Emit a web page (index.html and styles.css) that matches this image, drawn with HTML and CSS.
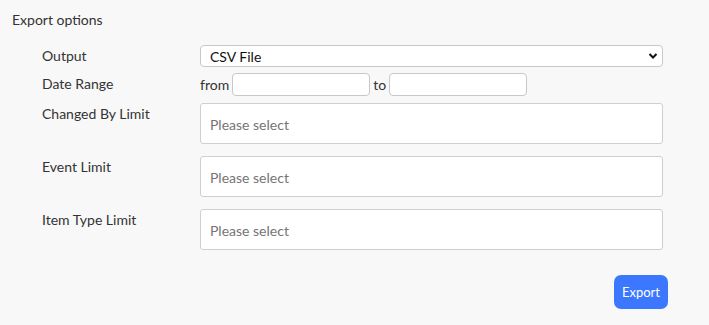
FILE: index.html
```html
<!DOCTYPE html>
<html>
<head>
<meta charset="utf-8">
<link rel="stylesheet" href="styles.css">
</head>
<body>
<div class="panel">
  <div class="title">Export options</div>
  <div class="form">
    <div class="row row-output">
      <div class="label">Output</div>
      <div class="control">
        <div class="select">
          <span>CSV File</span>
          <svg class="chev" width="10" height="8" viewBox="0 0 10 8"><path d="M1.5 2 L5 5.5 L8.5 2" fill="none" stroke="#111" stroke-width="2"/></svg>
        </div>
      </div>
    </div>
    <div class="row row-date">
      <div class="label">Date Range</div>
      <div class="control date">
        <span class="word">from</span><div class="input"></div><span class="word">to</span><div class="input"></div>
      </div>
    </div>
    <div class="row row-multi">
      <div class="label">Changed By Limit</div>
      <div class="control"><div class="multi">Please select</div></div>
    </div>
    <div class="row row-multi">
      <div class="label">Event Limit</div>
      <div class="control"><div class="multi">Please select</div></div>
    </div>
    <div class="row row-multi">
      <div class="label">Item Type Limit</div>
      <div class="control"><div class="multi">Please select</div></div>
    </div>
  </div>
  <div class="actions"><button class="btn">Export</button></div>
</div>
</body>
</html>
```
FILE: styles.css
```css
html, body {
  margin: 0;
  padding: 0;
  background: #f8f8f8;
}
body {
  font-family: Lato, "Open Sans", sans-serif;
  color: #333;
  font-size: 14px;
}
.panel {
  padding: 12px 0 0 12px;
  width: 656px;
}
.title {
  font-size: 14px;
  line-height: 16px;
  height: 16px;
}
.form {
  margin-top: 17px;
  padding-left: 30px;
}
.row {
  display: flex;
}
.label {
  width: 158px;
  flex: none;
}
.control {
  width: 463px;
}
.row-output {
  height: 22px;
  margin-bottom: 6px;
}
.row-output .label {
  line-height: 22px;
}
.select {
  box-sizing: border-box;
  height: 22px;
  border: 1px solid #c8c8c8;
  border-radius: 4px;
  background: #fff;
  display: flex;
  align-items: center;
  justify-content: space-between;
  padding: 0 4px 0 9px;
  color: #111;
  font-size: 14px;
}
.chev { display: block; }
.row-date {
  height: 23px;
  margin-bottom: 7px;
}
.row-date .label {
  line-height: 22px;
}
.date {
  display: flex;
  align-items: center;
}
.word {
  color: #333;
}
.input {
  box-sizing: border-box;
  width: 138px;
  height: 23px;
  border: 1px solid #c8c8c8;
  border-radius: 4px;
  background: #fff;
  margin: 0 3px 0 3px;
}
.row-multi {
  height: 41px;
  margin-bottom: 12px;
}
.row-multi .label {
  padding-top: 2px;
}
.multi {
  box-sizing: border-box;
  height: 41px;
  border: 1px solid #cfcfcf;
  border-radius: 3px;
  background: #fff;
  display: flex;
  align-items: center;
  padding: 2px 0 0 9px;
  color: #757575;
  font-size: 14px;
}
.actions {
  display: flex;
  justify-content: flex-end;
  margin-top: 25px;
}
.btn {
  width: 54px;
  height: 34px;
  border: none;
  border-radius: 7px;
  background: #3b78ff;
  color: #fff;
  font-family: Lato, sans-serif;
  font-size: 13px;
  padding: 0;
}
```
